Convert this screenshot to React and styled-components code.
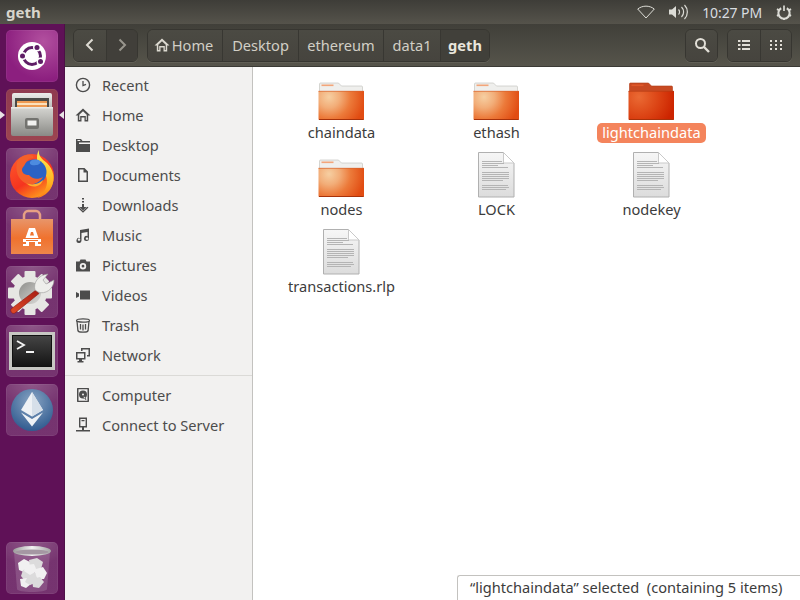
import React from 'react'
import styled, { createGlobalStyle } from 'styled-components'

const Global = createGlobalStyle`
  html, body { margin: 0; padding: 0; width: 800px; height: 600px; overflow: hidden; }
  body { font-family: "Noto Sans", "Liberation Sans", sans-serif; font-size: 14.6px; }
  * { box-sizing: border-box; }
`

const Screen = styled.div`
  width: 800px;
  height: 600px;
  display: flex;
  flex-direction: column;
  position: relative;
  overflow: hidden;
`
const TopBar = styled.div`
  height: 24px;
  flex: none;
  display: flex;
  align-items: center;
  padding: 0 8px 0 6px;
  background: linear-gradient(#3e3d38, #55534b);
  color: #dfdbd2;
`
const WindowTitle = styled.div`
  flex: 1;
  font-weight: 700;
  font-size: 15px;
  color: #d8d5cc;
`
const Clock = styled.span`
  font-size: 14px;
  color: #d9dde0;
  margin: 0 14px 0 13px;
  letter-spacing: -0.1px;
`
const Body = styled.div`
  flex: 1;
  display: flex;
  min-height: 0;
`
const Launcher = styled.div`
  width: 65px;
  flex: none;
  background: #5f1157;
  display: flex;
  flex-direction: column;
  align-items: center;
  gap: 7px;
  padding: 6px 0 6px 0;
  border-right: 1px solid #4d1047;
`
const Tile = styled.div`
  width: 52px;
  height: 52px;
  flex: none;
  border-radius: 5px;
  position: relative;
  display: flex;
  align-items: center;
  justify-content: center;
  margin-top: ${p => (p.$bottom ? 'auto' : '0')};
  background: ${p => p.$bg || 'radial-gradient(ellipse 70% 45% at 50% 0, rgba(255,255,255,.26), rgba(255,255,255,.1) 100%), rgba(255,255,255,.05)'};
  box-shadow: inset 0 0 0 1px rgba(255,255,255,.06);
`
const Pip = styled.span`
  position: absolute;
  top: 22px;
  width: 0;
  height: 0;
  border-top: 4px solid transparent;
  border-bottom: 4px solid transparent;
  ${p => (p.$side === 'left'
    ? 'left: -6px; border-left: 5px solid #e8e4e6;'
    : 'right: -6px; border-right: 5px solid #e8e4e6;')}
`
const Content = styled.div`
  flex: 1;
  display: flex;
  flex-direction: column;
  min-width: 0;
`
const Toolbar = styled.div`
  height: 43px;
  flex: none;
  display: flex;
  align-items: flex-start;
  padding: 5px 8px 0 8px;
  background: linear-gradient(#403f39, #56544b);
  border-bottom: 1px solid #3b3a35;
`
const Group = styled.div`
  display: flex;
  height: 33px;
  margin-right: ${p => p.$gap || 0}px;
  margin-left: ${p => (p.$push ? 'auto' : '0')};
  border: 1px solid #373631;
  border-radius: 6px;
  overflow: hidden;
  box-shadow: 0 1px 0 rgba(255,255,255,.07);
`
const ToolButton = styled.div`
  width: ${p => p.$w}px;
  display: flex;
  align-items: center;
  justify-content: center;
  padding-bottom: 2px;
  font-size: 14.6px;
  color: ${p => (p.$current ? '#e9e6de' : '#d2cfc6')};
  font-weight: ${p => (p.$current ? 700 : 400)};
  background: ${p => (p.$current ? '#41403a' : p.$dim ? '#413f3a' : 'linear-gradient(#4b4a43, #46443e)')};
  & + & { border-left: 1px solid #383732; }
`
const HomeCrumb = styled(ToolButton)`
  padding-right: 3px;
  gap: 2px;
`
const Panes = styled.div`
  flex: 1;
  display: flex;
  min-height: 0;
`
const Sidebar = styled.div`
  width: 188px;
  flex: none;
  background: #f2f1f0;
  border-right: 1px solid #c3c2bf;
  padding-top: 3px;
  display: flex;
  flex-direction: column;
`
const Place = styled.div`
  height: 30px;
  flex: none;
  display: flex;
  align-items: center;
  padding-left: 10px;
  gap: 11px;
  font-size: 14.6px;
  color: #4c4c4c;
`
const Rule = styled.div`
  height: 1px;
  background: #dbdad7;
  margin: 5px 0 4px;
`
const Files = styled.div`
  flex: 1;
  background: #fff;
  padding: 6px 0 0 11px;
  display: grid;
  grid-template-columns: repeat(3, 155px);
  grid-auto-rows: 77px;
  align-content: start;
`
const Item = styled.div`
  display: flex;
  flex-direction: column;
  align-items: center;
`
const ItemLabel = styled.span`
  margin-top: 2px;
  height: 20px;
  line-height: 18px;
  padding: 0 5px;
  border-radius: 5px;
  font-size: 14.6px;
  color: ${p => (p.$selected ? '#fff' : '#3c3c3c')};
  background: ${p => (p.$selected ? '#f4845c' : 'transparent')};
`
const Status = styled.div`
  position: absolute;
  left: 457px;
  right: 0;
  bottom: 0;
  height: 25px;
  background: #fff;
  border-top: 1px solid #c3c2bf;
  border-left: 1px solid #c3c2bf;
  border-top-left-radius: 3px;
  padding: 0 0 2px 12px;
  display: flex;
  align-items: center;
  font-size: 14.6px;
  color: #3c3c3c;
  white-space: pre;
`

const G = ({ size = 16, children, color = '#4c4c4c' }) => (
  <svg width={size} height={size} viewBox="0 0 16 16" fill={color} style={{ flex: 'none' }}>{children}</svg>
)

const places = [
  ['Recent', <><circle cx="8" cy="8" r="6.600" fill="none" stroke="#4c4c4c" strokeWidth="1.400" /><path d="M8 4v4.500l3-1.200" fill="none" stroke="#4c4c4c" strokeWidth="1.300" /></>],
  ['Home', <path d="M8 1.500L.5 8.500h2.300V14.500h3.700v-4h3v4h3.700V8.500h2.300zM4.300 7.800 8 4.200l3.700 3.600v5.200h-.9V9H5.200v4h-.9z" />],
  ['Desktop', <path d="M1 2h5l1.500 2H15v11H1zm1.500 1v1h3L5 3zM4 5.500V7h11V5.500z" />],
  ['Documents', <path fillRule="evenodd" d="M3 1h6.500L13 4.500V15H3zm1.500 1.500v11h7V5.500H8.500v-3z" />],
  ['Downloads', <path d="M7 1h2v1.500H7zm0 3h2v1.500H7zm0 3h2v3h2.500L8 13.500 4.500 10H7zM2.500 10.500l1.200-.8L8 14l4.300-4.300 1.200.8L8 15.800z" />],
  ['Music', <path d="M5 3l9-1.500v10a2.500 2.500 0 1 1-1.500-2.300V5L6.500 6v7.500A2.500 2.500 0 1 1 5 11.200zm-2 9a1.200 1.200 0 1 0 2 0 1.200 1.200 0 0 0-2 0zm8 -1a1.200 1.200 0 1 0 2 0 1.200 1.200 0 0 0-2 0z" fillRule="evenodd" />],
  ['Pictures', <path fillRule="evenodd" d="M5.500 2.500h5L11.500 4.500H15v10H1v-10h3.500zM8 6a3.200 3.200 0 1 0 0 6.400A3.200 3.200 0 0 0 8 6zm0 1.800a1.400 1.400 0 1 1 0 2.800 1.400 1.400 0 0 1 0-2.800z" />],
  ['Videos', <path d="M5 3.500h10v9H5zM1 5l3 1.500v3L1 11zm0 0" />],
  ['Trash', <><ellipse cx="8" cy="3.500" rx="6.500" ry="1.700" fill="none" stroke="#4c4c4c" strokeWidth="1.200" /><path d="M2 4l.9 9.500c.2 1 2 1.700 5.100 1.700s4.900-.7 5.100-1.700L14 4M5.500 7v5.500M8 7.500v6M10.500 7v5.500" fill="none" stroke="#4c4c4c" strokeWidth="1.300" /></>],
  ['Network', <path fillRule="evenodd" d="M6 1h9v8.500h-3V8h1.500V2.500h-6V4H6zM1 5h9.500v7.500H7V14h1.500v1.500h-6V14H4v-1.500H1zm1.500 1.500V11H9V6.500z" />],
]
const devices = [
  ['Computer', <path fillRule="evenodd" d="M2.500 1h11l.5.500v13l-.5.500h-11L2 14.500v-13zm1 1.300v11.400h9V2.300zM8 3.500a4 4 0 1 1 0 8 4 4 0 0 1 0-8zm0 3a1 1 0 1 0 0 2 1 1 0 0 0 0-2zm1 3l2.500 2.800-1 .7L8.500 10z" />],
  ['Connect to Server', <path fillRule="evenodd" d="M4 .5h8v10H9v2.500h6v1.500H1V13h6v-2.500H4zm1.400 1.400v7.200h5.200V1.900zM6.500 3h3v1.200h-3z" />],
]

const FolderIcon = ({ selected, id }) => (
  <svg width="48" height="48" viewBox="0 0 48 48">
    <defs>
      <radialGradient id={id} gradientUnits="userSpaceOnUse" cx="11" cy="24" r="36">
        <stop offset="0" stopColor={selected ? '#ea6a34' : '#f6cfa2'} />
        <stop offset=".3" stopColor={selected ? '#e25522' : '#f2ad78'} />
        <stop offset=".6" stopColor={selected ? '#da4012' : '#ec7a3a'} />
        <stop offset="1" stopColor={selected ? '#cc2400' : '#e14c12'} />
      </radialGradient>
    </defs>
    <path d="M1.500 11c0-.6.4-1 1-1h18l3 3h20c.6 0 1 .4 1 1v6h-43z" fill={selected ? '#c84a22' : '#efefed'} stroke={selected ? '#b03c18' : '#bdbdb9'} strokeWidth=".6" />
    <rect x="3.500" y="11.500" width="12" height="1.600" fill={selected ? '#e0582a' : '#f3a57a'} />
    <path d="M.5 18h45.500v28c0 .6-.5 1-1 1H1.500c-.5 0-1-.4-1-1z" fill={`url(#${id})`} />
    <path d="M1 46.500h44.500" stroke="#a8320a" strokeWidth="1" />
    <path d="M.5 18.300H46" stroke={selected ? '#b53c14' : '#d9612c'} strokeWidth=".7" />
  </svg>
)

const lineWs = [20, 22, 16, 26, 27, 27, 27, 27, 21, 26, 27, 24]
const lineYs = [11, 13, 15, 17, 22, 24, 26, 28, 30, 35, 37, 39]
const FileIcon = () => (
  <svg width="48" height="48" viewBox="0 0 48 48">
    <defs>
      <linearGradient id="paper" x1="0" y1="0" x2="0" y2="1">
        <stop offset="0" stopColor="#f6f6f6" />
        <stop offset="1" stopColor="#dcdcdc" />
      </linearGradient>
    </defs>
    <path d="M5.500 2.500h25l10.500 10.500v34h-35.500z" fill="url(#paper)" stroke="#b0b0b0" />
    <path d="M30.500 2.500v10.500h10.500z" fill="#fff" stroke="#c9c9c9" />
    {lineYs.map((y, i) => (
      <rect key={i} x="9" y={y} width={lineWs[i]} height="1" fill="#b4b4b4" />
    ))}
  </svg>
)

const UbuntuLogo = () => (
  <svg width="42" height="42" viewBox="0 0 42 42">
    <circle cx="21" cy="21" r="14" fill="#fff" />
    <circle cx="21" cy="21" r="8.500" fill="none" stroke="#5f1e66" strokeWidth="3" />
    <g fill="#fff">
      <circle cx="26" cy="12.500" r="4" /><circle cx="29.500" cy="26.500" r="4" /><circle cx="11.500" cy="21" r="4" />
    </g>
    <g fill="#5f1e66">
      <circle cx="26" cy="12.500" r="2.500" /><circle cx="29.500" cy="26.500" r="2.500" /><circle cx="11.500" cy="21" r="2.500" />
    </g>
  </svg>
)
const FilesIcon = () => (
  <svg width="44" height="46" viewBox="0 0 44 46">
    <defs>
      <linearGradient id="cab" x1="0" y1="0" x2="0" y2="1"><stop offset="0" stopColor="#d6d6d2" /><stop offset="1" stopColor="#8a8a86" /></linearGradient>
      <linearGradient id="cap" x1="0" y1="0" x2="0" y2="1"><stop offset="0" stopColor="#ececea" /><stop offset="1" stopColor="#a9a9a6" /></linearGradient>
    </defs>
    <rect x="2" y="1" width="40" height="20" rx="2" fill="url(#cap)" />
    <rect x="5" y="6" width="34" height="15" fill="#4a4a47" />
    <rect x="7" y="9" width="30" height="10" fill="#ee9a52" />
    <rect x="7" y="11" width="30" height="2" fill="#fbe0bb" />
    <path d="M1 15h42v27a2 2 0 0 1-2 2H3a2 2 0 0 1-2-2z" fill="url(#cab)" />
    <rect x="1" y="15" width="42" height="1.500" fill="#e9e9e6" />
    <rect x="15" y="26" width="14" height="11" rx="2" fill="#73736f" />
    <rect x="17.500" y="28.500" width="9" height="5" fill="#f2f2f0" />
  </svg>
)
const FirefoxIcon = () => (
  <svg width="46" height="50" viewBox="0 0 46 50">
    <defs>
      <linearGradient id="ffa" x1=".1" y1="0" x2=".7" y2="1"><stop offset="0" stopColor="#ff5a2c" /><stop offset=".6" stopColor="#f5341f" /><stop offset="1" stopColor="#ffa11c" /></linearGradient>
      <linearGradient id="ffb" x1="0" y1="0" x2="0" y2="1"><stop offset="0" stopColor="#ffee52" /><stop offset=".7" stopColor="#ffb020" /><stop offset="1" stopColor="#ff7a18" /></linearGradient>
    </defs>
    <circle cx="23" cy="27" r="22" fill="url(#ffa)" />
    <path d="M30 1c-1 6 3 9 8 13 7 7 8 16 5 23-3 7-9 11-15 12 8-5 12-13 9-22-2-7-9-10-9-17 0-3 0-6 2-9z" fill="url(#ffb)" />
    <circle cx="25" cy="23" r="12.500" fill="#2b62c4" />
    <path d="M31 12c-3-2-8-2-10 1-1 2 2 4 6 3 3 0 5-2 4-4z" fill="#4d8be0" />
    <path d="M8 13c3-6 9-8 14-7 3 1 3 2 2 3-5 0-6 3-8 6-1 3-3 3-3 6 0 3 3 5 7 5 3 4 9 5 14 2-4 7-13 9-18 6-7-4-10-12-8-21z" fill="#f4602a" />
    <path d="M17 34c6 3 13 1 17-3-2 7-11 9-17 3z" fill="#ffb02e" />
  </svg>
)
const StoreIcon = () => (
  <svg width="44" height="48" viewBox="0 0 44 48">
    <defs>
      <linearGradient id="bag" x1="0" y1="0" x2="0" y2="1"><stop offset="0" stopColor="#e8956a" /><stop offset=".55" stopColor="#f0722e" /><stop offset="1" stopColor="#ee864a" /></linearGradient>
    </defs>
    <path d="M14 12V7c0-3 2-5 4-5h8c2 0 4 2 4 5v5" fill="none" stroke="#e8a083" strokeWidth="2.500" />
    <rect x="1" y="10" width="42" height="35" fill="url(#bag)" />
    <path d="M19 19h6l3.500 10h-13z M13 30h18v3H13z M13 35h6v2h-6z M25 35h6v2h-6z M16 33h3v2h-3z M25 33h3v2h-3z" fill="#fff" />
    <path d="M21 23h2l1 3.500h-4z" fill="#f0742f" />
    <rect x="16" y="31" width="12" height="1" fill="#f0742f" />
  </svg>
)
const SettingsIcon = () => (
  <svg width="48" height="48" viewBox="0 0 48 48">
    <defs>
      <linearGradient id="wr" x1="0" y1="1" x2="1" y2="0"><stop offset="0" stopColor="#e04a28" /><stop offset="1" stopColor="#a71d12" /></linearGradient>
      <linearGradient id="hole" x1="0" y1="0" x2="1" y2="1"><stop offset="0" stopColor="#8d8d8a" /><stop offset="1" stopColor="#dcdcd9" /></linearGradient>
    </defs>
    <g fill="#e6e6e3">
      <circle cx="22" cy="25" r="17" />
      {[0, 45, 90, 135, 180, 225, 270, 315].map(a => (
        <rect key={a} x="16.500" y="3" width="11" height="7" rx="1" transform={`rotate(${a} 22 25)`} />
      ))}
    </g>
    <circle cx="22" cy="25" r="11" fill="url(#hole)" />
    <path d="M3 41l25-19 3 3.500L7 45c-3 1.500-5-2-4-4z" fill="url(#wr)" stroke="#8a1a10" strokeWidth=".6" />
    <path d="M27 22c-2-7 3-15 13-16l-5 6 3 4 8-4c0 9-9 15-16 12z" fill="#eeeeeb" stroke="#9b9b98" strokeWidth=".6" />
  </svg>
)
const TerminalIcon = () => (
  <svg width="46" height="38" viewBox="0 0 46 38">
    <defs>
      <linearGradient id="term" x1="0" y1="0" x2="0" y2="1"><stop offset="0" stopColor="#454545" /><stop offset="1" stopColor="#141414" /></linearGradient>
    </defs>
    <rect x="0" y="0" width="46" height="38" fill="#c7c7c3" />
    <rect x="3.500" y="3.500" width="39" height="31" fill="url(#term)" stroke="#111" />
    <path d="M8 9l7 4-7 4" fill="none" stroke="#f4f4f4" strokeWidth="1.800" />
    <rect x="17" y="19" width="8" height="2" fill="#f4f4f4" />
  </svg>
)
const EthereumIcon = () => (
  <svg width="44" height="44" viewBox="0 0 44 44">
    <defs>
      <radialGradient id="eth" cx="50%" cy="30%" r="75%"><stop offset="0" stopColor="#8aa5c4" /><stop offset="1" stopColor="#2a568c" /></radialGradient>
    </defs>
    <circle cx="22" cy="22" r="21" fill="url(#eth)" />
    <path d="M22 4l11 18-11 6.500L11 22z" fill="#eef1f5" />
    <path d="M22 4l11 18-11 6.500z" fill="#d6dfe9" />
    <path d="M11 24.500l11 6.500 11-6.500-11 14z" fill="#eef2f6" />
  </svg>
)
const crumples = [
  '8,20 14,16 20,19 22,25 16,30 9,27', '19,17 27,15 33,19 31,26 24,28 20,24',
  '26,26 33,24 37,30 34,36 27,36 24,31', '13,27 21,25 26,31 23,38 15,38 11,33',
  '10,36 17,35 21,41 16,45 11,43', '22,36 30,34 34,39 29,45 23,44',
  '16,22 24,21 27,28 20,32 14,28', '18,33 26,32 28,39 20,42 15,39',
]
const TrashTileIcon = () => (
  <svg width="44" height="50" viewBox="0 0 44 50">
    <defs>
      <linearGradient id="rim" x1="0" y1="0" x2="1" y2="0"><stop offset="0" stopColor="#9b9b9b" /><stop offset=".5" stopColor="#f2f2f2" /><stop offset="1" stopColor="#a5a5a5" /></linearGradient>
    </defs>
    <path d="M4 9l3 37c.3 2 7 3 15 3s14.700-1 15-3l3-37z" fill="rgba(255,255,255,.14)" />
    {crumples.map((pts, i) => <polygon key={i} points={pts} fill={i % 2 ? '#dcdbdc' : '#f1f0f1'} />)}
    <ellipse cx="22" cy="8" rx="19" ry="5" fill="url(#rim)" />
    <ellipse cx="22" cy="9" rx="16.500" ry="2.500" fill="#a597a3" />
  </svg>
)

const Chevron = ({ dir, color }) => (
  <svg width="14" height="14" viewBox="0 0 14 14">
    <path d={dir === 'left' ? 'M9.500 1.500L4 7l5.500 5.500' : 'M4.500 1.500L10 7l-5.500 5.500'} fill="none" stroke={color} strokeWidth="2" />
  </svg>
)

const crumbs = [['Desktop', 76], ['ethereum', 85], ['data1', 57]]
const items = [
  ['chaindata', 'folder'], ['ethash', 'folder'], ['lightchaindata', 'folder', true],
  ['nodes', 'folder'], ['LOCK', 'file'], ['nodekey', 'file'],
  ['transactions.rlp', 'file'],
]

export default function App() {
  return (
    <Screen>
      <Global />
      <TopBar>
        <WindowTitle>geth</WindowTitle>
        <svg width="18" height="14" viewBox="0 0 18 14">
          <path d="M.7 4C5.500 .2 12.500 .2 17.300 4L9 13z" fill="none" stroke="#dcdcd6" strokeWidth="1" />
        </svg>
        <svg width="20" height="16" viewBox="0 0 20 16" style={{ marginLeft: 14 }}>
          <path d="M0 5.500h3L7 2v12l-4-3.500H0z" fill="#dcdcd6" />
          <path d="M9.500 5.500a3.500 3.500 0 0 1 0 5M12.500 3a7 7 0 0 1 0 10M15.500 1a10 10 0 0 1 0 14" fill="none" stroke="#dcdcd6" strokeWidth="1.200" />
        </svg>
        <Clock>10:27 PM</Clock>
        <svg width="16" height="17" viewBox="0 0 17 17">
          <path d="M8.500 1v6" stroke="#dcdcd6" strokeWidth="1.800" />
          <path d="M5.500 4a6 6 0 1 0 6 0" fill="none" stroke="#dcdcd6" strokeWidth="2.200" />
          <path d="M1 5l2 1M16 5l-2 1M1 12l2-1M16 12l-2-1M8.500 14.500v2" stroke="#dcdcd6" strokeWidth="2" />
        </svg>
      </TopBar>
      <Body>
        <Launcher>
          <Tile $bg="radial-gradient(circle at 72% 22%, #b2509f, #8c1f7f 70%)"><UbuntuLogo /></Tile>
          <Tile $bg="linear-gradient(#8f3a50, #9c4450)">
            <Pip $side="left" /><FilesIcon /><Pip $side="right" />
          </Tile>
          <Tile><FirefoxIcon /></Tile>
          <Tile><StoreIcon /></Tile>
          <Tile><SettingsIcon /></Tile>
          <Tile><TerminalIcon /></Tile>
          <Tile><EthereumIcon /></Tile>
          <Tile $bottom><TrashTileIcon /></Tile>
        </Launcher>
        <Content>
          <Toolbar>
            <Group $gap={9}>
              <ToolButton $w={32}><Chevron dir="left" color="#dedbd3" /></ToolButton>
              <ToolButton $w={31} $dim><Chevron dir="right" color="#99968e" /></ToolButton>
            </Group>
            <Group>
              <HomeCrumb $w={74}>
                <svg width="16" height="16" viewBox="0 0 16 16" fill="#dcd9d0"><path d="M8 1.500L.5 8.500h2.300V14.500h3.700v-4h3v4h3.700V8.500h2.300zM4.300 7.800 8 4.200l3.700 3.600v5.200h-.9V9H5.200v4h-.9z" /></svg>
                Home
              </HomeCrumb>
              {crumbs.map(([name, w]) => <ToolButton key={name} $w={w}>{name}</ToolButton>)}
              <ToolButton $w={49} $current>geth</ToolButton>
            </Group>
            <Group $push $gap={9}>
              <ToolButton $w={31}>
                <svg width="16" height="16" viewBox="0 0 16 16"><circle cx="6.500" cy="6.500" r="4.500" fill="none" stroke="#e2dfd7" strokeWidth="2" /><path d="M10 10l5 5" stroke="#e2dfd7" strokeWidth="2.400" /></svg>
              </ToolButton>
            </Group>
            <Group>
              <ToolButton $w={32}>
                <svg width="12" height="12" viewBox="0 0 12 12" fill="#e2dfd7"><path d="M0 1h2.500v2H0zM4 1h8v2H4zM0 5h2.500v2H0zM4 5h8v2H4zM0 9h2.500v2H0zM4 9h8v2H4z" /></svg>
              </ToolButton>
              <ToolButton $w={31}>
                <svg width="12" height="12" viewBox="0 0 12 12" fill="#e2dfd7"><path d="M0 1h2v2H0zM5 1h2v2H5zM10 1h2v2h-2zM0 5h2v2H0zM5 5h2v2H5zM10 5h2v2h-2zM0 9h2v2H0zM5 9h2v2H5zM10 9h2v2h-2z" /></svg>
              </ToolButton>
            </Group>
          </Toolbar>
          <Panes>
            <Sidebar>
              {places.map(([name, icon]) => <Place key={name}><G>{icon}</G>{name}</Place>)}
              <Rule />
              {devices.map(([name, icon]) => <Place key={name}><G>{icon}</G>{name}</Place>)}
            </Sidebar>
            <Files>
              {items.map(([name, kind, selected]) => (
                <Item key={name}>
                  {kind === 'folder' ? <FolderIcon id={`f-${name}`} selected={selected} /> : <FileIcon />}
                  <ItemLabel $selected={selected}>{name}</ItemLabel>
                </Item>
              ))}
            </Files>
          </Panes>
        </Content>
      </Body>
      <Status>“lightchaindata” selected  (containing 5 items)</Status>
    </Screen>
  )
}
